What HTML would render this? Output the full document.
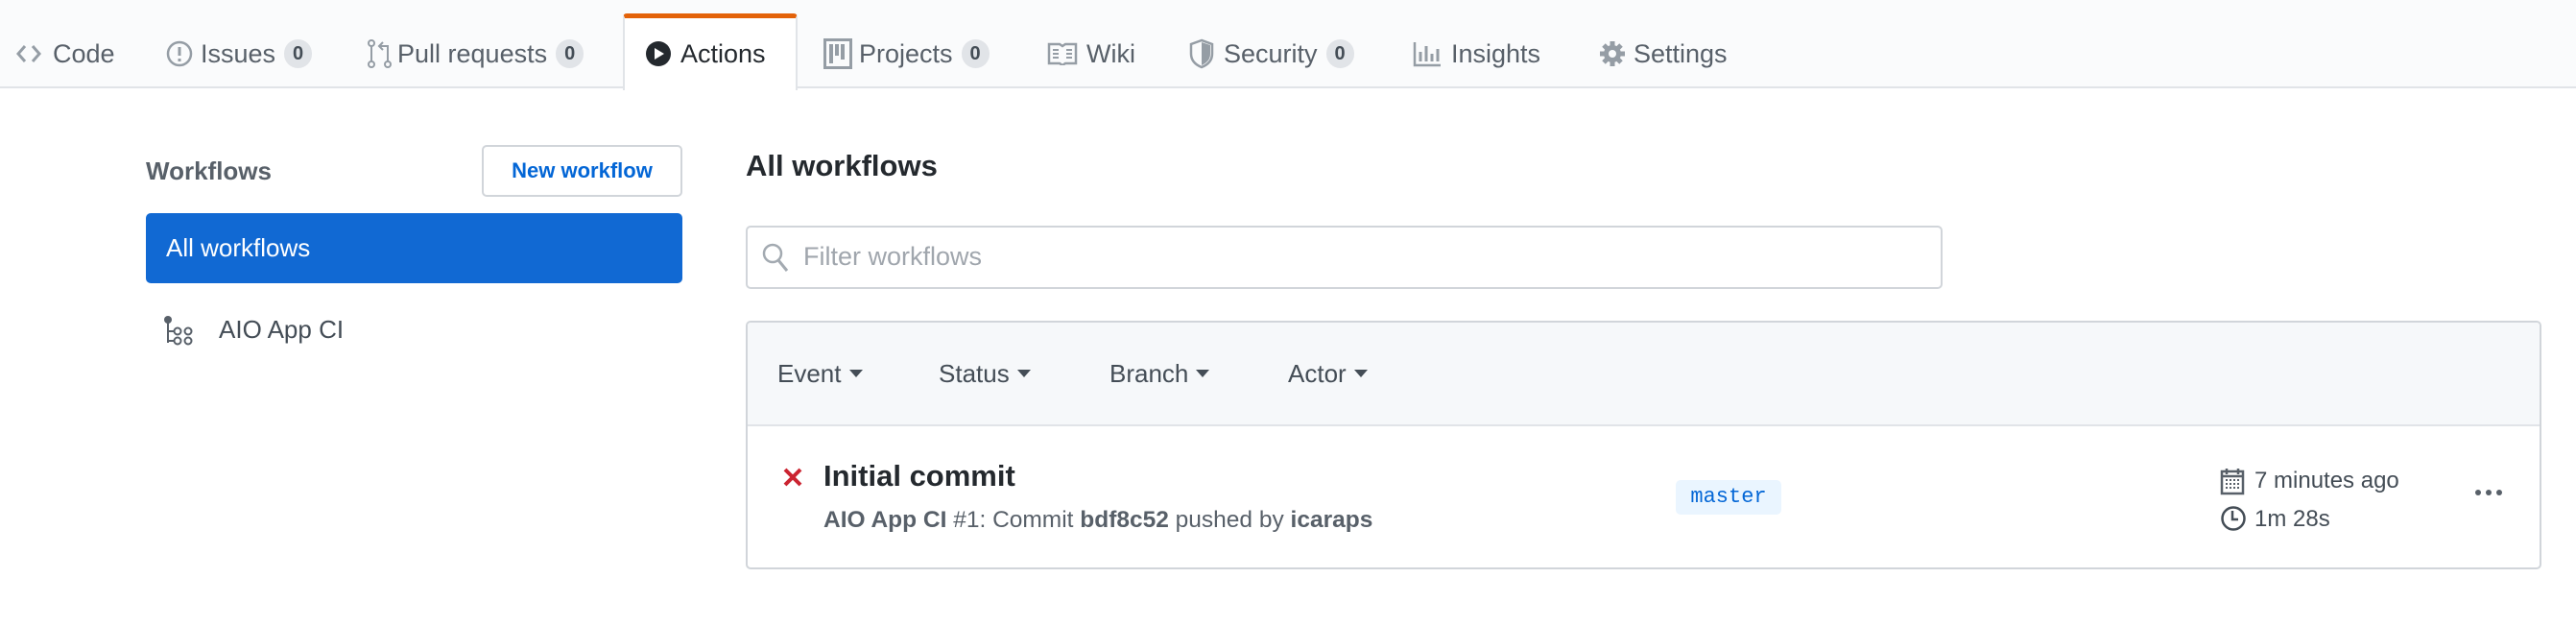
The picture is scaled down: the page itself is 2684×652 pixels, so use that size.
<!DOCTYPE html>
<html><head><meta charset="utf-8"><style>
*{box-sizing:border-box;margin:0;padding:0}
body{width:2684px;height:652px;background:#fff;font-family:"Liberation Sans",sans-serif;color:#24292e;position:relative;overflow:hidden}
.abs{position:absolute}
.tabbar{position:absolute;left:0;top:0;width:2684px;height:92px;background:#fafbfc;border-bottom:2px solid #e1e4e8}
.tab{position:absolute;top:38px;font-size:27px;color:#586069;line-height:36px;white-space:nowrap}
.cnt{display:inline-block;background:#e1e4e8;color:#444d56;border-radius:18px;font-size:20px;font-weight:bold;line-height:30px;padding:0 9px;vertical-align:3px;margin-left:9px}
.act{position:absolute;left:649px;top:14px;width:182px;height:80px;background:#fff;border:2px solid #e1e4e8;border-top:5px solid #e36209;border-bottom:none;border-radius:4px 4px 0 0}
svg{position:absolute}
.f{position:absolute;font-size:26px;color:#444d56;top:374px}
.f:after{content:"";display:inline-block;border:7px solid transparent;border-top:8px solid #444d56;margin-left:8px;vertical-align:-2px}
</style></head><body>
<div class="tabbar"></div>
<div class="act"></div>
<svg style="left:16px;top:44px" width="28" height="24" viewBox="0 0 28 24"><path d="M10 4L3 12l7 8M18 4l7 8-7 8" stroke="#959da5" stroke-width="3" fill="none"/></svg>
<div class="tab" style="left:55px">Code</div>
<svg style="left:173px;top:42px" width="28" height="28" viewBox="0 0 28 28"><circle cx="14" cy="14" r="12" stroke="#959da5" stroke-width="2.5" fill="none"/><path d="M14 7v9M14 19v3" stroke="#959da5" stroke-width="3"/></svg>
<div class="tab" style="left:209px">Issues<span class="cnt">0</span></div>
<svg style="left:382px;top:40px" width="28" height="32" viewBox="0 0 28 32"><circle cx="5" cy="27" r="3" stroke="#959da5" stroke-width="2" fill="none"/><circle cx="5" cy="5" r="3" stroke="#959da5" stroke-width="2" fill="none"/><circle cx="22" cy="27" r="3" stroke="#959da5" stroke-width="2" fill="none"/><path d="M5 8v16M22 24V8h-8M17 4l-4 4 4 4" stroke="#959da5" stroke-width="2" fill="none"/></svg>
<div class="tab" style="left:414px">Pull requests<span class="cnt">0</span></div>
<svg style="left:672px;top:42px" width="28" height="28" viewBox="0 0 28 28"><circle cx="14" cy="14" r="13" fill="#24292e"/><path d="M10 8v12l10-6z" fill="#fff"/></svg>
<div class="tab" style="left:709px;color:#24292e">Actions</div>
<svg style="left:858px;top:40px" width="30" height="32" viewBox="0 0 30 32"><rect x="1.5" y="1.5" width="27" height="29" stroke="#959da5" stroke-width="3" fill="none"/><path d="M8 6v20M14 6v12M20 6v16" stroke="#959da5" stroke-width="4"/></svg>
<div class="tab" style="left:895px">Projects<span class="cnt">0</span></div>
<svg style="left:1091px;top:44px" width="32" height="24" viewBox="0 0 32 24"><path d="M2 2h11l3 2 3-2h11v20H19l-3 2-3-2H2z" stroke="#959da5" stroke-width="2.5" fill="none"/><path d="M6 8h6M6 12h6M6 16h6M20 8h6M20 12h6M20 16h6" stroke="#959da5" stroke-width="2"/></svg>
<div class="tab" style="left:1132px">Wiki</div>
<svg style="left:1238px;top:40px" width="28" height="32" viewBox="0 0 28 32"><path d="M14 2L3 6v10c0 8 6 12 11 14 5-2 11-6 11-14V6z" stroke="#959da5" stroke-width="2.5" fill="none"/><path d="M14 4v24c4-2 9-5 9-12V7z" fill="#959da5"/></svg>
<div class="tab" style="left:1275px">Security<span class="cnt">0</span></div>
<svg style="left:1472px;top:42px" width="30" height="28" viewBox="0 0 30 28"><path d="M2 2v24h27" stroke="#959da5" stroke-width="2.5" fill="none"/><path d="M8 22V12M14 22V6M20 22V14M26 22V9" stroke="#959da5" stroke-width="3"/></svg>
<div class="tab" style="left:1512px">Insights</div>
<svg style="left:1666px;top:42px" width="28" height="28" viewBox="0 0 28 28"><circle cx="14" cy="14" r="9" fill="#959da5"/><path d="M14 1v26M1 14h26M5 5l18 18M23 5L5 23" stroke="#959da5" stroke-width="5"/><circle cx="14" cy="14" r="4" fill="#fafbfc"/></svg>
<div class="tab" style="left:1702px">Settings</div>

<div class="abs" style="left:152px;top:163px;font-size:26px;font-weight:bold;color:#586069">Workflows</div>
<div class="abs" style="left:502px;top:151px;width:209px;height:54px;border:2px solid #d1d5da;border-radius:5px;background:#fff;color:#0366d6;font-size:22px;font-weight:bold;text-align:center;line-height:50px">New workflow</div>
<div class="abs" style="left:152px;top:222px;width:559px;height:73px;background:#1169d3;border-radius:5px;color:#fff;font-size:26px;line-height:73px;padding-left:21px">All workflows</div>
<svg style="left:170px;top:328px" width="36" height="32" viewBox="0 0 36 32"><circle cx="5" cy="5" r="4" fill="#586069"/><path d="M5 5v24M5 17h6M5 27h6" stroke="#586069" stroke-width="2" fill="none"/><g stroke="#586069" stroke-width="2" fill="none"><circle cx="15" cy="17" r="3.5"/><circle cx="26" cy="17" r="3.5"/><circle cx="15" cy="27" r="3.5"/><circle cx="26" cy="27" r="3.5"/></g></svg>
<div class="abs" style="left:228px;top:328px;font-size:26px;color:#444d56">AIO App CI</div>

<div class="abs" style="left:777px;top:155px;font-size:31px;font-weight:bold;color:#24292e">All workflows</div>
<div class="abs" style="left:777px;top:235px;width:1247px;height:66px;border:2px solid #d1d5da;border-radius:5px"></div>
<svg style="left:793px;top:252px" width="30" height="34" viewBox="0 0 30 34"><circle cx="12" cy="12" r="9" stroke="#a3aab1" stroke-width="2.5" fill="none"/><path d="M18 19l9 11" stroke="#a3aab1" stroke-width="3"/></svg>
<div class="abs" style="left:837px;top:252px;font-size:27px;color:#a0a6ad">Filter workflows</div>

<div class="abs" style="left:777px;top:334px;width:1871px;height:259px;border:2px solid #d1d5da;border-radius:5px;overflow:hidden">
<div style="height:108px;background:#f6f8fa;border-bottom:2px solid #e1e4e8"></div></div>
<div class="f" style="left:810px">Event</div>
<div class="f" style="left:978px">Status</div>
<div class="f" style="left:1156px">Branch</div>
<div class="f" style="left:1342px">Actor</div>

<svg style="left:815px;top:486px" width="22" height="22" viewBox="0 0 22 22"><path d="M3 3l16 16M19 3L3 19" stroke="#cb2431" stroke-width="4"/></svg>
<div class="abs" style="left:858px;top:478px;font-size:31px;font-weight:bold;color:#24292e">Initial commit</div>
<div class="abs" style="left:858px;top:528px;font-size:24.5px;color:#586069"><b>AIO App CI</b> #1: Commit <b>bdf8c52</b> pushed by <b>icaraps</b></div>
<div class="abs" style="left:1746px;top:500px;width:110px;height:36px;background:#eaf5ff;border-radius:5px;color:#0366d6;font-family:'Liberation Mono',monospace;font-size:22px;text-align:center;line-height:36px">master</div>
<svg style="left:2313px;top:486px" width="26" height="30" viewBox="0 0 26 30"><rect x="2" y="5" width="22" height="23" stroke="#586069" stroke-width="2.5" fill="none"/><path d="M2 10h22M7 2v6M19 2v6" stroke="#586069" stroke-width="2.5"/><path d="M6 14h14M6 18h14M6 22h14" stroke="#586069" stroke-width="2" stroke-dasharray="2 2"/></svg>
<div class="abs" style="left:2349px;top:487px;font-size:24px;color:#444d56">7 minutes ago</div>
<svg style="left:2313px;top:526px" width="28" height="28" viewBox="0 0 28 28"><circle cx="14" cy="14" r="11.5" stroke="#444d56" stroke-width="2.5" fill="none"/><path d="M13 6v9h6" stroke="#444d56" stroke-width="2.5" fill="none"/></svg>
<div class="abs" style="left:2349px;top:527px;font-size:24px;color:#444d56">1m 28s</div>
<svg style="left:2578px;top:508px" width="30" height="10" viewBox="0 0 30 10"><circle cx="4" cy="5" r="3" fill="#586069"/><circle cx="15" cy="5" r="3" fill="#586069"/><circle cx="26" cy="5" r="3" fill="#586069"/></svg>
</body></html>
